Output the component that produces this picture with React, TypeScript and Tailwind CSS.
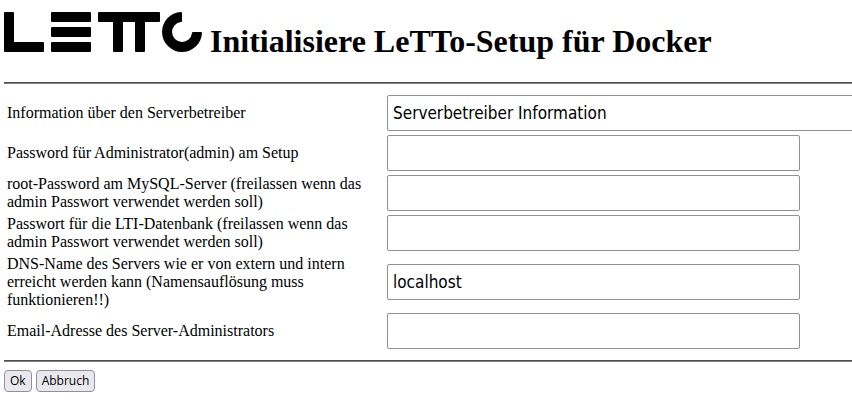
type Field = {
  id: string;
  label: string;
  type: "text" | "password" | "email";
  value?: string;
  wide?: boolean;
};

const fields: Field[] = [
  {
    id: "info",
    label: "Information über den Serverbetreiber",
    type: "text",
    value: "Serverbetreiber Information",
    wide: true,
  },
  { id: "admin", label: "Password für Administrator(admin) am Setup", type: "password" },
  {
    id: "mysql",
    label: "root-Password am MySQL-Server (freilassen wenn das admin Passwort verwendet werden soll)",
    type: "password",
  },
  {
    id: "lti",
    label: "Passwort für die LTI-Datenbank (freilassen wenn das admin Passwort verwendet werden soll)",
    type: "password",
  },
  {
    id: "dns",
    label: "DNS-Name des Servers wie er von extern und intern erreicht werden kann (Namensauflösung muss funktionieren!!)",
    type: "text",
    value: "localhost",
  },
  { id: "email", label: "Email-Adresse des Server-Administrators", type: "email" },
];

function Logo() {
  return (
    <svg className="h-10 w-[198px] shrink-0" viewBox="0 0 198 40" role="img" aria-label="LeTTo">
      <path d="M1 0h8a1 1 0 0 1 1 1v29h29a1 1 0 0 1 1 1v8a1 1 0 0 1-1 1H1a1 1 0 0 1-1-1V1a1 1 0 0 1 1-1Z" />
      <rect x="47" width="40" height="10" rx="1" />
      <rect x="47" y="15" width="40" height="10" rx="1" />
      <rect x="47" y="30" width="40" height="10" rx="1" />
      <path d="M95 0h60a1 1 0 0 1 1 1v8a1 1 0 0 1-1 1h-14v29a1 1 0 0 1-1 1h-8a1 1 0 0 1-1-1V10h-12v29a1 1 0 0 1-1 1h-8a1 1 0 0 1-1-1V10H95a1 1 0 0 1-1-1V1a1 1 0 0 1 1-1Z" />
      <path d="M177 0A20 20 0 1 0 198 21a1 1 0 0 0-1-1h-8a1 1 0 0 0-1 1A10 10 0 1 1 177 10a1 1 0 0 0 1-1V1a1 1 0 0 0-1-1Z" />
    </svg>
  );
}

const buttonClass =
  "h-[22px] rounded border border-[#8f8f9d] bg-[#e9e9ed] px-[5px] font-['Open_Sans',sans-serif] text-xs leading-5";

const ruleClass = "h-0 border-t border-b border-t-[#4f4f4f] border-b-[#808080]";

export default function App() {
  return (
    <main className="overflow-x-hidden bg-white pt-3 pb-3 pl-1 font-['Liberation_Serif',serif] text-base text-black">
      <header className="flex items-end gap-2">
        <Logo />
        <h1 className="text-[32px] leading-[22px] font-bold">Initialisiere LeTTo-Setup für Docker</h1>
      </header>
      <hr className={`mt-[30px] ${ruleClass}`} />
      <form onSubmit={(event) => event.preventDefault()}>
        <div className="flex flex-col gap-1 py-[11px]">
          {fields.map((field) => (
            <div key={field.id} className="flex items-center">
              <label htmlFor={field.id} className="w-[383px] shrink-0 pr-4 pl-[3px] leading-[18px]">
                {field.label}
              </label>
              <input
                id={field.id}
                type={field.type}
                defaultValue={field.value}
                className={`h-9 shrink-0 rounded-xs border border-[#8f8f9d] bg-white px-[5px] font-['DejaVu_Sans_Condensed','Noto_Sans',sans-serif] text-[17px] ${
                  field.wide ? "w-[826px]" : "w-[413px]"
                }`}
              />
            </div>
          ))}
        </div>
        <hr className={ruleClass} />
        <div className="flex gap-1 pt-2">
          <button type="submit" className={buttonClass}>
            Ok
          </button>
          <button type="button" className={buttonClass}>
            Abbruch
          </button>
        </div>
      </form>
    </main>
  );
}
